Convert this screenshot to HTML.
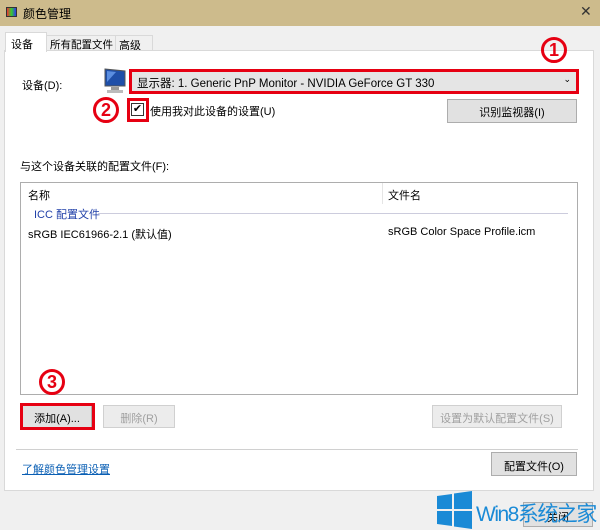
<!DOCTYPE html>
<html><head><meta charset="utf-8"><style>
*{margin:0;padding:0;box-sizing:border-box}
body{width:600px;height:530px;background:#f0f0f0;position:relative;overflow:hidden;font-family:"Liberation Sans","Noto Sans CJK SC",sans-serif;font-size:11px;color:#000}
.a{position:absolute;white-space:nowrap}
.btn{position:absolute;background:#e1e1e1;border:1px solid #adadad;text-align:center;font-size:11px;white-space:nowrap}
.dis{color:#a0a0a0;background:#ececec;border-color:#d0d0d0}
.red{position:absolute;border:3px solid #e60012}
.circ{position:absolute;width:26px;height:26px;border:3px solid #e60012;border-radius:50%;color:#e60012;font-weight:bold;font-size:18px;line-height:20px;text-align:center}
</style></head><body>
<div class="a" style="left:0;top:0;width:600px;height:26px;background:#cdbb8c"></div>
<div class="a" style="left:6px;top:7px;width:11px;height:10px;background:linear-gradient(90deg,#e33,#3c3,#33e);border:1px solid #333"></div>
<div class="a" style="left:23px;top:5px;font-size:12px">颜色管理</div>
<div class="a" style="left:580px;top:3px;font-size:14px;color:#333">✕</div>
<div class="a" style="left:46px;top:35px;width:70px;height:16px;border:1px solid #d9d9d9;background:#f0f0f0;padding:1px 3px;font-size:10.5px">所有配置文件</div>
<div class="a" style="left:115px;top:35px;width:38px;height:16px;border:1px solid #d9d9d9;background:#f0f0f0;padding:1px 3px">高级</div>
<div class="a" style="left:4px;top:50px;width:590px;height:441px;background:#fff;border:1px solid #d9d9d9"></div>
<div class="a" style="left:5px;top:32px;width:42px;height:20px;background:#fff;border:1px solid #d9d9d9;border-bottom:none;padding:3px 5px">设备</div>
<div class="a" style="left:22px;top:77px">设备(D):</div>
<svg class="a" style="left:102px;top:67px" width="26" height="28"><path d="M3 2 L23 4 L23 19 L3 19Z" fill="#1f4fa8" stroke="#555"/><path d="M5 4 L14 5 L5 15Z" fill="#5b8ee0"/><rect x="9" y="20" width="8" height="3" fill="#999"/><rect x="5" y="23" width="16" height="3" fill="#bbb"/></svg>
<div class="a" style="left:131px;top:71px;width:446px;height:21px;background:#e5e5e5;border:1px solid #acacac;padding:3px 5px;font-size:11.5px">显示器: 1. Generic PnP Monitor - NVIDIA GeForce GT 330<span style="position:absolute;right:5px;top:2px;font-size:9px">⌄</span></div>
<div class="red" style="left:129px;top:69px;width:450px;height:25px"></div>
<div class="circ" style="left:541px;top:37px">1</div>
<div class="circ" style="left:93px;top:97px">2</div>
<div class="a" style="left:131px;top:103px;width:13px;height:13px;border:1px solid #333;background:#fff;font-size:11px;line-height:11px;text-align:center">✔</div>
<div class="red" style="left:127px;top:98px;width:22px;height:24px"></div>
<div class="a" style="left:150px;top:103px">使用我对此设备的设置(U)</div>
<div class="btn" style="left:447px;top:99px;width:130px;height:24px;padding-top:4px">识别监视器(I)</div>
<div class="a" style="left:20px;top:158px">与这个设备关联的配置文件(F):</div>
<div class="a" style="left:20px;top:182px;width:558px;height:213px;border:1px solid #adadad;background:#fff"></div>
<div class="a" style="left:382px;top:183px;width:1px;height:21px;background:#e5e5e5"></div>
<div class="a" style="left:28px;top:187px">名称</div>
<div class="a" style="left:388px;top:187px">文件名</div>
<div class="a" style="left:34px;top:206px;color:#1f3fa8">ICC 配置文件</div>
<div class="a" style="left:98px;top:213px;width:470px;height:1px;background:#ccd"></div>
<div class="a" style="left:28px;top:226px">sRGB IEC61966-2.1 (默认值)</div>
<div class="a" style="left:388px;top:226px">sRGB Color Space Profile.icm</div>
<div class="circ" style="left:39px;top:369px">3</div>
<div class="btn" style="left:22px;top:405px;width:70px;height:23px;padding-top:4px">添加(A)...</div>
<div class="red" style="left:20px;top:403px;width:75px;height:27px"></div>
<div class="btn dis" style="left:103px;top:405px;width:72px;height:23px;padding-top:4px">删除(R)</div>
<div class="btn dis" style="left:432px;top:405px;width:130px;height:23px;padding-top:4px">设置为默认配置文件(S)</div>
<div class="a" style="left:16px;top:449px;width:562px;height:1px;background:#d0d0d0"></div>
<div class="a" style="left:22px;top:461px;color:#0a5fb4;text-decoration:underline">了解颜色管理设置</div>
<div class="btn" style="left:491px;top:452px;width:86px;height:24px;padding-top:5px">配置文件(O)</div>
<div class="btn" style="left:523px;top:502px;width:70px;height:25px;padding-top:6px">关闭</div>
<svg class="a" style="left:437px;top:490px" width="36" height="40"><path d="M0 6 L15 4 L15 19 L0 19Z M17 3.5 L35 1 L35 19 L17 19Z M0 21 L15 21 L15 36 L0 34Z M17 21 L35 21 L35 39 L17 36.5Z" fill="#1a8ad6"/></svg>
<div class="a" style="left:476px;top:498px;font-size:21px;color:#1a8ad6;letter-spacing:-1.5px">Win8系统之家</div>
</body></html>
